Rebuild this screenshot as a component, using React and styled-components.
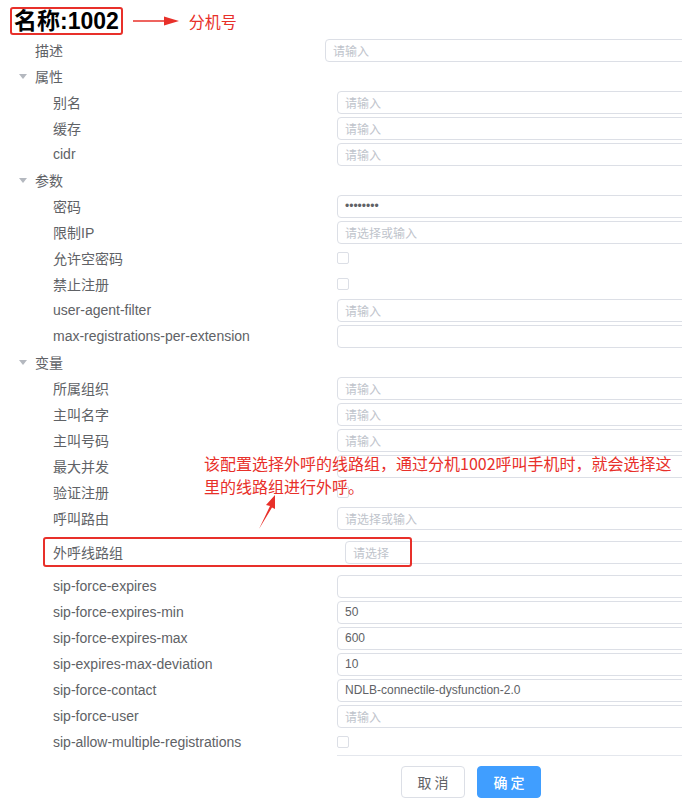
import styled, { createGlobalStyle } from 'styled-components';

const GlobalStyle = createGlobalStyle`
  body {
    margin: 0;
    background: #fff;
    overflow: hidden;
    font-family: "Liberation Sans", Arial, "Noto Sans CJK SC", sans-serif;
  }
`

const RED = '#e8302a'

const Page = styled.div`
  position: relative;
  width: 682px;
  min-height: 809px;
`

const Header = styled.div`
  display: flex;
  align-items: center;
  height: 28px;
  padding: 7px 0 2px 10px;
`

const Title = styled.div`
  box-sizing: border-box;
  height: 28px;
  padding: 0 2px;
  border: 2px solid ${RED};
  border-radius: 3px;
  font-size: 23px;
  font-weight: bold;
  line-height: 24px;
  color: #000;
`

const HeadArrow = styled.svg`
  margin-left: 10px;
  flex-shrink: 0;
`

const HeadNote = styled.span`
  margin-left: 10px;
  font-size: 16px;
  color: ${RED};
`

const Row = styled.div`
  display: flex;
  align-items: center;
  height: ${p => p.$h || 26}px;
  padding-left: ${p => p.$indent}px;
`

const Caret = styled.span`
  width: 0;
  height: 0;
  margin-right: 8px;
  border-left: 4px solid transparent;
  border-right: 4px solid transparent;
  border-top: 5px solid #b4b8bf;
`

const Label = styled.span`
  width: ${p => p.$w || 0}px;
  flex-shrink: 0;
  font-size: 14px;
  color: #606266;
  white-space: nowrap;
`

const Field = styled.div`
  box-sizing: border-box;
  width: 380px;
  height: 23px;
  flex-shrink: 0;
  display: flex;
  align-items: center;
  padding: 0 7px;
  border: 1px solid #dcdfe6;
  border-radius: 4px;
  font-size: 12px;
  color: ${p => (p.$placeholder ? '#c0c4cc' : '#606266')};
`

const Check = styled.span`
  box-sizing: border-box;
  width: 12px;
  height: 12px;
  border: 1px solid #dcdfe6;
  border-radius: 2px;
`

const Marked = styled(Row)`
  position: relative;

  &::after {
    content: '';
    position: absolute;
    left: 43px;
    top: 6px;
    width: 369px;
    height: 30px;
    box-sizing: border-box;
    border: 2px solid ${RED};
    border-radius: 3px;
  }
`

const Note = styled.div`
  position: absolute;
  left: 204px;
  top: 452px;
  width: 480px;
  font-size: 16px;
  line-height: 23px;
  color: ${RED};
  font-family: "Noto Sans CJK SC", sans-serif;
`

const NoteArrow = styled.svg`
  position: absolute;
  left: 256px;
  top: 494px;
`

const Divider = styled.div`
  margin-left: 337px;
  border-top: 1px solid #e4e7ed;
`

const Footer = styled.div`
  display: flex;
  gap: 12px;
  padding: 10px 0 0 401px;
`

const Button = styled.button`
  width: 64px;
  height: 32px;
  padding: 0;
  border-radius: 4px;
  border: 1px solid ${p => (p.$primary ? '#409eff' : '#dcdfe6')};
  background: ${p => (p.$primary ? '#409eff' : '#fff')};
  color: ${p => (p.$primary ? '#fff' : '#606266')};
  font-size: 14px;
  font-family: "Noto Sans CJK SC", sans-serif;
  font-weight: ${p => (p.$primary ? 500 : 400)};
`

const Input = ({ value, placeholder }) =>
  value ? <Field>{value}</Field> : <Field $placeholder>{placeholder ?? '请输入'}</Field>

const groups = [
  {
    title: '属性',
    items: [['别名'], ['缓存'], ['cidr']],
  },
  {
    title: '参数',
    items: [
      ['密码', { value: '••••••••' }],
      ['限制IP', { placeholder: '请选择或输入' }],
      ['允许空密码', 'check'],
      ['禁止注册', 'check'],
      ['user-agent-filter'],
      ['max-registrations-per-extension', { placeholder: '' }],
    ],
  },
  {
    title: '变量',
    items: [
      ['所属组织'],
      ['主叫名字'],
      ['主叫号码'],
      ['最大并发', { placeholder: '' }],
      ['验证注册', 'check'],
      ['呼叫路由', { placeholder: '请选择或输入' }],
    ],
  },
]

const sipRows = [
  ['sip-force-expires', { placeholder: '' }],
  ['sip-force-expires-min', { value: '50' }],
  ['sip-force-expires-max', { value: '600' }],
  ['sip-expires-max-deviation', { value: '10' }],
  ['sip-force-contact', { value: 'NDLB-connectile-dysfunction-2.0' }],
  ['sip-force-user'],
  ['sip-allow-multiple-registrations', 'check'],
]

const Item = ({ label, ctl }) => (
  <Row $indent={53}>
    <Label $w={284}>{label}</Label>
    {ctl === 'check' ? <Check /> : <Input {...(ctl || {})} />}
  </Row>
)

export default function App() {
  return (
    <Page>
      <GlobalStyle />
      <Header>
        <Title>名称:1002</Title>
        <HeadArrow width="46" height="10" viewBox="0 0 46 10">
          <path d="M0 4.2 L33 4.2 L33 5.8 L0 5.8 Z" fill={RED} />
          <path d="M31 0.5 L46 5 L31 9.5 Z" fill={RED} />
        </HeadArrow>
        <HeadNote>分机号</HeadNote>
      </Header>

      <Row $indent={35}>
        <Label $w={290}>描述</Label>
        <Input />
      </Row>

      {groups.map(g => (
        <div key={g.title}>
          <Row $indent={19}>
            <Caret />
            <Label>{g.title}</Label>
          </Row>
          {g.items.map(([label, ctl]) => (
            <Item key={label} label={label} ctl={ctl} />
          ))}
        </div>
      ))}

      <Marked $indent={53} $h={42}>
        <Label $w={292}>外呼线路组</Label>
        <Input placeholder="请选择" />
      </Marked>

      {sipRows.map(([label, ctl]) => (
        <Item key={label} label={label} ctl={ctl} />
      ))}

      <Divider />
      <Footer>
        <Button>取 消</Button>
        <Button $primary>确 定</Button>
      </Footer>

      <Note>该配置选择外呼的线路组，通过分机1002呼叫手机时，就会选择这里的线路组进行外呼。</Note>
      <NoteArrow width="24" height="36" viewBox="0 0 24 36">
        <path d="M3 35 L14 12 L10 11 L19 1 L19 15 L16 13.5 Z" fill={RED} />
      </NoteArrow>
    </Page>
  )
}
